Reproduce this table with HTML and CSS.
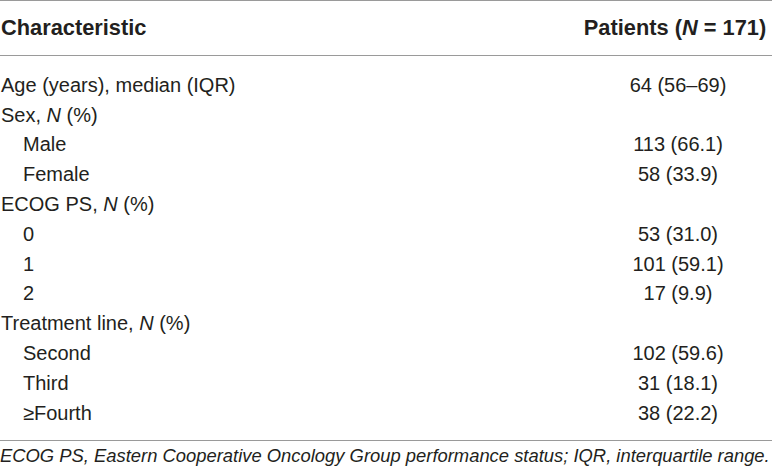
FILE: index.html
```html
<!DOCTYPE html>
<html lang="en">
<head>
<meta charset="utf-8">
<link rel="stylesheet" href="styles.css">
</head>
<body>
<div class="tbl">
  <div class="head">
    <div class="c1">Characteristic</div>
    <div class="c2">Patients (<i>N</i> = 171)</div>
  </div>
  <div class="body">
    <div class="row"><div class="c1">Age (years), median (IQR)</div><div class="c2">64 (56–69)</div></div>
    <div class="row"><div class="c1">Sex, <i>N</i> (%)</div><div class="c2"></div></div>
    <div class="row"><div class="c1 sub">Male</div><div class="c2">113 (66.1)</div></div>
    <div class="row"><div class="c1 sub">Female</div><div class="c2">58 (33.9)</div></div>
    <div class="row"><div class="c1">ECOG PS, <i>N</i> (%)</div><div class="c2"></div></div>
    <div class="row"><div class="c1 sub">0</div><div class="c2">53 (31.0)</div></div>
    <div class="row"><div class="c1 sub">1</div><div class="c2">101 (59.1)</div></div>
    <div class="row"><div class="c1 sub">2</div><div class="c2">17 (9.9)</div></div>
    <div class="row"><div class="c1">Treatment line, <i>N</i> (%)</div><div class="c2"></div></div>
    <div class="row"><div class="c1 sub">Second</div><div class="c2">102 (59.6)</div></div>
    <div class="row"><div class="c1 sub">Third</div><div class="c2">31 (18.1)</div></div>
    <div class="row"><div class="c1 sub">≥Fourth</div><div class="c2">38 (22.2)</div></div>
  </div>
  <p class="note">ECOG PS, Eastern Cooperative Oncology Group performance status; IQR, interquartile range.</p>
</div>
</body>
</html>
```

FILE: styles.css
```css
html, body {
  margin: 0;
  padding: 0;
  background: #fff;
}
body {
  font-family: "Liberation Sans", Arial, sans-serif;
  color: #231f20;
  font-size: 20px;
}
.tbl {
  width: 772px;
}
.head {
  display: grid;
  grid-template-columns: 1fr 190px;
  height: 54px;
  align-items: center;
  border-top: 1px solid #9a9a9a;
  border-bottom: 1px solid #9a9a9a;
  font-weight: bold;
  font-size: 21.8px;
}
.head .c1 {
  padding-left: 1px;
}
.head .c2 {
  text-align: center;
  padding-right: 4px;
}
.body {
  padding: 14px 0 12px;
  border-bottom: 1px solid #9a9a9a;
}
.row {
  display: grid;
  grid-template-columns: 1fr 186px;
  height: 29.8px;
  align-items: center;
  line-height: 24px;
}
.row .c1 {
  padding-left: 1px;
}
.row .c1.sub {
  padding-left: 23px;
}
.row .c2 {
  text-align: center;
  padding-right: 2px;
}
.note {
  margin: 0;
  padding-top: 3px;
  font-style: italic;
  font-size: 18.4px;
  line-height: 24px;
  white-space: nowrap;
}
```
